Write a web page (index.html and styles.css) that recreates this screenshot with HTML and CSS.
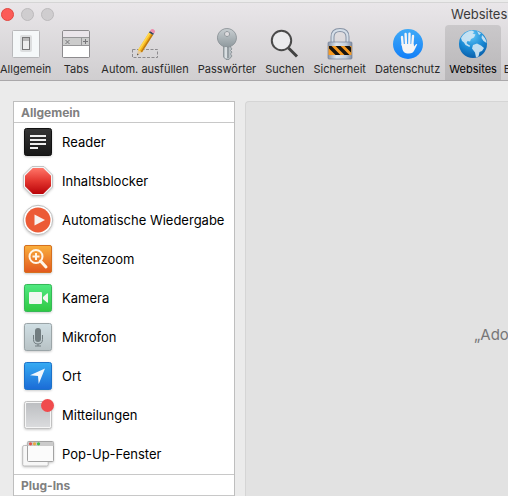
FILE: index.html
```html
<!DOCTYPE html>
<html lang="de">
<head>
<meta charset="utf-8">
<title>Websites</title>
<link rel="stylesheet" href="styles.css">
</head>
<body>
<div class="window">
  <header class="chrome">
    <div class="titlebar">
      <button class="light light-close" aria-label="Schließen"></button>
      <button class="light" aria-label="Minimieren"></button>
      <button class="light" aria-label="Zoomen"></button>
      <h1 class="title">Websites</h1>
    </div>
    <nav class="toolbar">
      <button class="tool">
        <svg class="tool-icon" viewBox="0 0 32 32"><rect x="2.500" y="2.500" width="27" height="27" rx="1" fill="#f5f8f9" stroke="#b9b9bb"/><rect x="10" y="7" width="12" height="17" rx="2" fill="#dcdedf"/><rect x="12.500" y="9.500" width="7" height="12" fill="#b9b9b9" stroke="#777"/><rect x="13" y="13" width="6" height="8" fill="#ededed"/></svg>
        <span>Allgemein</span>
      </button>
      <button class="tool">
        <svg class="tool-icon" viewBox="0 0 32 32"><path d="M2.500 29V4q0-1.500 1.500-1.500h24q1.500 0 1.500 1.500v25q0 .5-1 .5h-25q-1 0-1-.5z" fill="#fff" stroke="#8d8b8e"/><path d="M3 9V4q0-1 1-1h24q1 0 1 1v5z" fill="#eae5ea"/><path d="M3 9.500h26v8H3z" fill="#ccc"/><path d="M3 9.500h26M3 17.500h26M21.500 10v7" stroke="#969698"/><path d="M5.500 12l4 4m0-4l-4 4M23 13.500h5m-2.500-2.500v5" stroke="#77777a"/></svg>
        <span>Tabs</span>
      </button>
      <button class="tool">
        <svg class="tool-icon" viewBox="0 0 32 32"><rect x="3.500" y="21.500" width="25" height="8" fill="none" stroke="#8d8b8e" stroke-dasharray="3 1.500"/><path d="M8 27.500l1-5.500 4 2.300z" fill="#e7c99a"/><path d="M8 27.500l.5-2 1.200.7z" fill="#333"/><path d="M9 22L20 4.500l4 2.500-11 17.300z" fill="#f6b61b"/><path d="M9 22L20 4.500l1.400.9-11 17.300z" fill="#ffd74d"/><path d="M11.700 23.500L22.700 6.200 24 7 13 24.300z" fill="#bd7813"/><path d="M20 4.500l1-1.600 4 2.500-1 1.600z" fill="#39465d"/><path d="M21 2.900l1-1.500q1.200-1 2.800 0 1.700 1 1.200 2.500l-1 1.500z" fill="#ee8cac"/></svg>
        <span>Autom. ausfüllen</span>
      </button>
      <button class="tool">
        <svg class="tool-icon" viewBox="0 0 32 32"><defs><linearGradient id="key" x2="0" y2="1"><stop stop-color="#c9cfd2"/><stop offset="1" stop-color="#8f999e"/></linearGradient></defs><path d="M12.500 16h7v3l1.500 2-1.500 1.500 1.500 1.500-1.500 2 1.500 2-3 3.500h-3l-2.500-2.500z" fill="#b7bfc3" stroke="#848c91" stroke-width=".8"/><path fill-rule="evenodd" d="M16 .5a9.500 9.300 0 1 1-.1 0zm0 3a2.500 2.500 0 1 0 .1 0z" fill="url(#key)" stroke="#848c91" stroke-width=".8"/><path d="M15 19v11" stroke="#e4e9eb" stroke-width="1.500"/><path d="M17 19v11" stroke="#747d82"/></svg>
        <span>Passwörter</span>
      </button>
      <button class="tool">
        <svg class="tool-icon" viewBox="0 0 32 32"><path d="M19.500 20l8.500 8.500" stroke="#414141" stroke-width="3"/><circle cx="12.500" cy="12.500" r="9.700" fill="#ebebed" stroke="#4a4a4a" stroke-width="2"/></svg>
        <span>Suchen</span>
      </button>
      <button class="tool">
        <svg class="tool-icon" viewBox="0 0 32 32"><defs><linearGradient id="steel"><stop stop-color="#8996aa"/><stop offset=".35" stop-color="#dde6ef"/><stop offset=".75" stop-color="#c2ccd9"/><stop offset="1" stop-color="#7f8ca2"/></linearGradient><clipPath id="band"><path d="M5 18h22v9H5z"/></clipPath></defs><path d="M8.500 15V9q0-7 7.500-7t7.500 7v6" fill="none" stroke="#8793a5" stroke-width="4"/><path d="M8.500 15V9q0-7 7.500-7t7.500 7v6" fill="none" stroke="#d4dee8" stroke-width="2"/><rect x="4" y="14" width="24" height="17" rx="1" fill="url(#steel)" stroke="#76839a" stroke-width=".7"/><path d="M4.500 18h23v9h-23z" fill="#f79a22"/><g clip-path="url(#band)" stroke="#171411" stroke-width="3.500"><path d="M3 16l13 13M12 16l13 13M21 16l13 13"/></g></svg>
        <span>Sicherheit</span>
      </button>
      <button class="tool">
        <svg class="tool-icon" viewBox="0 0 32 32"><defs><linearGradient id="blue" x2="0" y2="1"><stop stop-color="#40aaf7"/><stop offset="1" stop-color="#127ff8"/></linearGradient></defs><circle cx="16" cy="16" r="15" fill="url(#blue)"/><g stroke="#f5f4f5" stroke-width="2.400" stroke-linecap="round"><path d="M10.700 17l-.7-8M14 16l-.4-10M17.300 16l.2-10.300M20.300 17L21 8"/></g><path d="M9.500 16h12l.7 2.500q.8-2 2.200-2.500.8-.2.800.6L22.500 22q-1.500 3.500-5.500 3.500h-2q-3.500-.5-4.500-4z" fill="#f5f4f5"/></svg>
        <span>Datenschutz</span>
      </button>
      <button class="tool tool-active" aria-current="page">
        <svg class="tool-icon" viewBox="0 0 32 32"><defs><radialGradient id="globe" cx=".45" cy=".2" r=".85"><stop stop-color="#60c5f7"/><stop offset=".55" stop-color="#1989d4"/><stop offset="1" stop-color="#0759a5"/></radialGradient></defs><circle cx="16" cy="16" r="14" fill="url(#globe)"/><path d="M4 10Q8 3 15 2.500l2.500 1.500-2 1.500 3 1-1.500 3-3 1.500-1 2.500-2.500-.5-1 2 1.500 1.500 2 1-.5 1.500-4-2-1.500-2.500L5 13zM20 3l4 2.500-2 1.500zM25 7q4 3 4.500 8l-3-2-2-3zM16 17l4-1.500 4 2 3 2.500-2 3-2.500 1-1 4.500-2.500 1-1-5-3-4z" fill="#d0e6f3" opacity=".92"/></svg>
        <span>Websites</span>
      </button>
      <button class="tool tool-cut"><span>E</span></button>
    </nav>
  </header>
  <main class="content">
    <nav class="sidebar">
      <h2 class="group">Allgemein</h2>
      <ul class="list">
        <li><a class="row" href="#reader"><svg class="row-icon" viewBox="0 0 32 32"><defs><linearGradient id="black" x2="0" y2="1"><stop stop-color="#353535"/><stop offset="1" stop-color="#171717"/></linearGradient></defs><rect x="2.500" y="2.500" width="27" height="27" rx="2" fill="url(#black)" stroke="#111"/><path d="M8 10h16M8 14h16M8 18h16M8 22h8" stroke="#eee" stroke-width="2"/></svg>Reader</a></li>
        <li><a class="row" href="#blocker"><svg class="row-icon" viewBox="0 0 32 32"><defs><linearGradient id="red" x2="0" y2="1"><stop stop-color="#ff7568"/><stop offset=".5" stop-color="#e3362f"/><stop offset="1" stop-color="#b90309"/></linearGradient></defs><path d="M10 1.500h12l8.500 8.500v12L22 30.500H10L1.500 22V10z" fill="#f5f5f5" stroke="#c4c4c4"/><path d="M10.800 3h10.400L29 10.800v10.400L21.200 29H10.800L3 21.200V10.800z" fill="url(#red)"/></svg>Inhaltsblocker</a></li>
        <li><a class="row" href="#autoplay"><svg class="row-icon" viewBox="0 0 32 32"><circle cx="16" cy="16" r="14.700" fill="#fff" stroke="#bdbdbd"/><circle cx="16" cy="16" r="12.500" fill="#ec5b36"/><path d="M12.500 10.500L23 16l-10.500 5.500z" fill="#f7f2ef"/></svg>Automatische Wiedergabe</a></li>
        <li><a class="row" href="#zoom"><svg class="row-icon" viewBox="0 0 32 32"><defs><linearGradient id="orange" x2="0" y2="1"><stop stop-color="#fab03d"/><stop offset="1" stop-color="#e2571e"/></linearGradient></defs><rect x="2.500" y="2.500" width="27" height="27" rx="1.500" fill="url(#orange)" stroke="#d5701f"/><circle cx="14" cy="13.500" r="6.500" fill="none" stroke="#fff6e9" stroke-width="2"/><path d="M18.500 18l5.500 6" stroke="#fff6e9" stroke-width="3" stroke-linecap="round"/><path d="M10.500 13.500h7M14 10v7" stroke="#fff6e9" stroke-width="2"/></svg>Seitenzoom</a></li>
        <li><a class="row" href="#camera"><svg class="row-icon" viewBox="0 0 32 32"><defs><linearGradient id="green" x2="0" y2="1"><stop stop-color="#50e981"/><stop offset="1" stop-color="#2fc842"/></linearGradient></defs><rect x="2.500" y="2.500" width="27" height="27" rx="2" fill="url(#green)" stroke="#35b957"/><rect x="7" y="10" width="13" height="12" rx="1" fill="#f2f7f1"/><path d="M21 15l4-3.500q1-.5 1 .5v8q0 1-1 .5L21 17z" fill="#f2f7f1"/></svg>Kamera</a></li>
        <li><a class="row" href="#microphone"><svg class="row-icon" viewBox="0 0 32 32"><defs><linearGradient id="mist" x2="0" y2="1"><stop stop-color="#d0dfe4"/><stop offset="1" stop-color="#b8c2c5"/></linearGradient></defs><rect x="2.500" y="2.500" width="27" height="27" rx="2" fill="url(#mist)" stroke="#9ba5a8"/><rect x="13" y="7" width="6" height="14" rx="3" fill="#727d80"/><path d="M11.500 14v4.500q0 4.500 4.500 4.500t4.500-4.500V14M16 23v2M13 25h6" fill="none" stroke="#727d80"/></svg>Mikrofon</a></li>
        <li><a class="row" href="#location"><svg class="row-icon" viewBox="0 0 32 32"><defs><linearGradient id="sky" x2="0" y2="1"><stop stop-color="#37acf3"/><stop offset="1" stop-color="#1b6bd6"/></linearGradient></defs><rect x="2.500" y="2.500" width="27" height="27" rx="2" fill="url(#sky)" stroke="#1c72c9"/><path d="M23 8.500l-6.300 15.500-.7-8-8-.7z" fill="#f2f7fc"/></svg>Ort</a></li>
        <li><a class="row" href="#notifications"><svg class="row-icon" viewBox="0 0 32 32"><defs><linearGradient id="grey" x2="0" y2="1"><stop stop-color="#bdbfc2"/><stop offset="1" stop-color="#dadbdd"/></linearGradient></defs><rect x="2.500" y="2.500" width="27" height="27" rx="2" fill="#f6f6f6" stroke="#c1c1c1"/><rect x="4" y="4" width="24" height="24" rx=".5" fill="url(#grey)"/><circle cx="25.500" cy="6.500" r="6.500" fill="#f04b4d"/></svg>Mitteilungen</a></li>
        <li><a class="row" href="#popups"><svg class="row-icon" viewBox="0 0 32 32"><rect x=".7" y="7.500" width="25.500" height="20.500" rx="1.500" fill="#f7f7f7" stroke="#bcbcbc"/><rect x="5.500" y="3.500" width="26" height="20" rx="1" fill="#fbfbfb" stroke="#a3a3a3"/><path d="M5.500 4h26v4h-26z" fill="#cbcbcb"/><circle cx="8.500" cy="5.800" r="1.600" fill="#df514c"/><circle cx="12.500" cy="5.800" r="1.600" fill="#e5ac43"/><circle cx="16.500" cy="5.800" r="1.600" fill="#43b94a"/></svg>Pop-Up-Fenster</a></li>
      </ul>
      <h2 class="group group-next">Plug-Ins</h2>
    </nav>
    <section class="detail"><p class="message">„Ado</p></section>
  </main>
</div>
</body>
</html>
```
FILE: styles.css
```css
* {
  box-sizing: border-box;
}

body {
  margin: 0;
  background: #ebebeb;
  color: #111;
  font: 13px/16px Inter, "Liberation Sans", sans-serif;
  overflow: hidden;
}

h1, h2, p, ul {
  margin: 0;
  padding: 0;
}

button {
  border: 0;
  background: none;
  color: inherit;
  font: inherit;
  padding: 0;
}

.window {
  display: flex;
  flex-direction: column;
  min-height: 100vh;
}

.chrome {
  margin-top: 2px;
  border-top: 1px solid #d5d5d5;
  border-bottom: 1px solid #aaa8aa;
  background: linear-gradient(#e9e6e9, #d0ced0);
}

.titlebar {
  display: flex;
  align-items: center;
  gap: 7px;
  height: 22px;
  padding-left: 1px;
}

.light {
  flex: none;
  width: 13px;
  height: 13px;
  border: 1px solid #bcbabc;
  border-radius: 50%;
  background: #cfcdcf;
}

.light-close {
  border-color: #e2463f;
  background: #fc5b57;
}

.title {
  margin-left: 390px;
  font-size: 13px;
  font-weight: 400;
  color: #3a3a3a;
}

.toolbar {
  display: flex;
  gap: 1px;
  height: 55px;
  margin-left: -4px;
  overflow: hidden;
}

.tool {
  display: flex;
  flex: none;
  flex-direction: column;
  align-items: center;
  gap: 1px;
  padding: 3px 4px 0;
  border-radius: 4px 4px 0 0;
  color: #292929;
  font-size: 11px;
  line-height: 16px;
  white-space: nowrap;
}

.tool-active {
  background: linear-gradient(#cac8ca, #b9b7b9);
  color: #000;
}

.tool-cut {
  justify-content: flex-end;
  padding: 0 2px 3px;
}

.tool-icon,
.row-icon {
  display: block;
  flex: none;
  width: 32px;
  height: 32px;
}

.content {
  display: flex;
  flex: 1;
  gap: 10px;
  padding: 20px 0 0 13px;
}

.sidebar {
  flex: none;
  width: 222px;
  border: 1px solid #bebebe;
  border-bottom: 0;
  background: #fff;
}

.group {
  height: 21px;
  padding-left: 7px;
  border-bottom: 1px solid #c8c8c8;
  color: #808080;
  font: bold 12px/22px Inter, "Liberation Sans", sans-serif;
}

.group-next {
  height: 22px;
  border-top: 1px solid #c8c8c8;
}

.list {
  list-style: none;
}

.row {
  display: flex;
  align-items: center;
  gap: 8px;
  height: 39px;
  padding: 0 0 2px 8px;
  color: #000;
  text-decoration: none;
  white-space: nowrap;
}

.row-icon {
  filter: drop-shadow(0 1px 1px #0003);
}

.detail {
  display: flex;
  flex: 1;
  align-items: center;
  min-width: 0;
  padding: 72px 0 0 228px;
  border: 1px solid #d5d5d5;
  border-right: 0;
  border-bottom: 0;
  border-radius: 4px 0 0 0;
  background: #e2e2e2;
}

.message {
  color: #777;
  font-size: 15px;
  line-height: 20px;
}
```
